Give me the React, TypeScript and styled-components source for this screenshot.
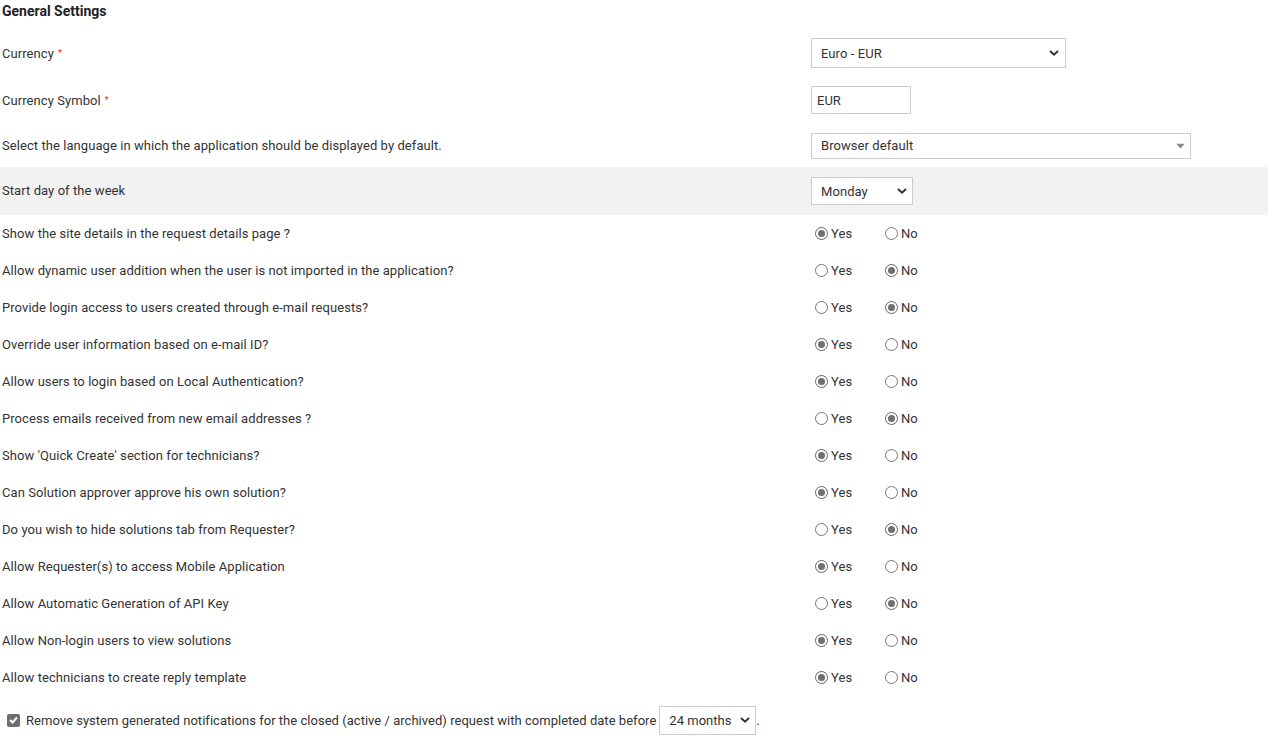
import React, { useState } from 'react';
import styled, { createGlobalStyle } from 'styled-components';

const GlobalStyle = createGlobalStyle`
  body {
    margin: 0;
    background: #fff;
    font-family: Roboto, "Liberation Sans", Arial, sans-serif;
    font-size: 13px;
    letter-spacing: 0.07px;
    color: #333;
  }
`;

const Page = styled.div`
  width: 1268px;
  padding-left: 2px;
  box-sizing: border-box;
`;

const Title = styled.h3`
  margin: 0;
  height: 30px;
  padding-top: 3px;
  box-sizing: border-box;
  font-size: 14px;
  font-weight: 700;
  letter-spacing: 0;
  color: #222;
  line-height: 16px;
`;

const Row = styled.div<{ $h: number; $shaded?: boolean }>`
  display: grid;
  grid-template-columns: 809px 1fr;
  align-items: center;
  height: ${(p) => p.$h}px;
  margin-left: -2px;
  padding-left: 2px;
  background: ${(p) => (p.$shaded ? '#f2f2f2' : 'transparent')};
`;

const Label = styled.div`
  line-height: 16px;
`;

const Required = styled.span`
  color: #e8262d;
  font-size: 9px;
  margin-left: 4px;
  vertical-align: 2px;
`;

const SelectWrap = styled.div<{ $w: number; $h: number }>`
  position: relative;
  width: ${(p) => p.$w}px;
  height: ${(p) => p.$h}px;
  border: 1px solid #ccc;
  box-sizing: border-box;
  background: #fff;
  display: flex;
  align-items: center;
  padding-left: 9px;
  color: #333;
`;

const Arrow = styled.span<{ $right: number }>`
  position: absolute;
  right: ${(p) => p.$right}px;
  top: 50%;
  transform: translateY(-50%);
  display: flex;
`;

const TextInput = styled.input`
  width: 100px;
  height: 28px;
  border: 1px solid #ccc;
  box-sizing: border-box;
  padding: 0 5px;
  font: inherit;
  color: #333;
  outline: none;
`;

const RadioGroup = styled.div`
  display: flex;
  padding-left: 4px;
`;

const Option = styled.label`
  width: 70px;
  display: flex;
  align-items: center;
  cursor: pointer;
`;

const Circle = styled.span<{ $on: boolean }>`
  width: 13px;
  height: 13px;
  border-radius: 50%;
  border: 1px solid ${(p) => (p.$on ? '#666' : '#777')};
  box-sizing: border-box;
  margin-right: 3px;
  display: flex;
  align-items: center;
  justify-content: center;
  &::after {
    content: '';
    width: 7px;
    height: 7px;
    border-radius: 50%;
    background: ${(p) => (p.$on ? '#707070' : 'transparent')};
  }
`;

const FooterRow = styled.div`
  display: flex;
  align-items: center;
  height: 48px;
  padding-left: 5px;
  letter-spacing: 0.03px;
`;

const Check = styled.span`
  width: 13px;
  height: 13px;
  border-radius: 2px;
  background: #6e6e6e;
  display: flex;
  align-items: center;
  justify-content: center;
  margin-right: 6px;
`;

const Chevron = () => (
  <svg width="10" height="7" viewBox="0 0 10 7">
    <path d="M1 1.5 L5 5.2 L9 1.5" fill="none" stroke="#333" strokeWidth="2" />
  </svg>
);

const Triangle = () => (
  <svg width="9" height="5" viewBox="0 0 9 5">
    <path d="M0 0 H9 L4.5 5 Z" fill="#888" />
  </svg>
);

interface Question {
  text: string;
  yes: boolean;
}

const questions: Question[] = [
  { text: 'Show the site details in the request details page ?', yes: true },
  { text: 'Allow dynamic user addition when the user is not imported in the application?', yes: false },
  { text: 'Provide login access to users created through e-mail requests?', yes: false },
  { text: 'Override user information based on e-mail ID?', yes: true },
  { text: 'Allow users to login based on Local Authentication?', yes: true },
  { text: 'Process emails received from new email addresses ?', yes: false },
  { text: "Show 'Quick Create' section for technicians?", yes: true },
  { text: 'Can Solution approver approve his own solution?', yes: true },
  { text: 'Do you wish to hide solutions tab from Requester?', yes: false },
  { text: 'Allow Requester(s) to access Mobile Application', yes: true },
  { text: 'Allow Automatic Generation of API Key', yes: false },
  { text: 'Allow Non-login users to view solutions', yes: true },
  { text: 'Allow technicians to create reply template', yes: true },
];

const YesNo: React.FC<{ initial: boolean }> = ({ initial }) => {
  const [value, setValue] = useState(initial);
  return (
    <RadioGroup>
      <Option onClick={() => setValue(true)}>
        <Circle $on={value} />
        Yes
      </Option>
      <Option onClick={() => setValue(false)}>
        <Circle $on={!value} />
        No
      </Option>
    </RadioGroup>
  );
};

const App: React.FC = () => {
  return (
    <Page>
      <GlobalStyle />
      <Title>General Settings</Title>

      <Row $h={46}>
        <Label>
          Currency<Required>*</Required>
        </Label>
        <SelectWrap $w={255} $h={30}>
          Euro - EUR
          <Arrow $right={6}>
            <Chevron />
          </Arrow>
        </SelectWrap>
      </Row>

      <Row $h={48}>
        <Label>
          Currency Symbol<Required>*</Required>
        </Label>
        <div>
          <TextInput defaultValue="EUR" />
        </div>
      </Row>

      <Row $h={43}>
        <Label>Select the language in which the application should be displayed by default.</Label>
        <SelectWrap $w={380} $h={26}>
          Browser default
          <Arrow $right={5}>
            <Triangle />
          </Arrow>
        </SelectWrap>
      </Row>

      <Row $h={48} $shaded>
        <Label>Start day of the week</Label>
        <SelectWrap $w={102} $h={28}>
          Monday
          <Arrow $right={5}>
            <Chevron />
          </Arrow>
        </SelectWrap>
      </Row>

      {questions.map((q) => (
        <Row $h={37} key={q.text}>
          <Label>{q.text}</Label>
          <YesNo initial={q.yes} />
        </Row>
      ))}

      <FooterRow>
        <Check>
          <svg width="9" height="8" viewBox="0 0 9 8">
            <path d="M1 4 L3.5 6.5 L8 1.5" fill="none" stroke="#fff" strokeWidth="2" />
          </svg>
        </Check>
        Remove system generated notifications for the closed (active / archived) request with completed date before
        <SelectWrap $w={97} $h={29} style={{ marginLeft: 3 }}>
          24 months
          <Arrow $right={5}>
            <Chevron />
          </Arrow>
        </SelectWrap>
        .
      </FooterRow>
    </Page>
  );
};

export default App;
